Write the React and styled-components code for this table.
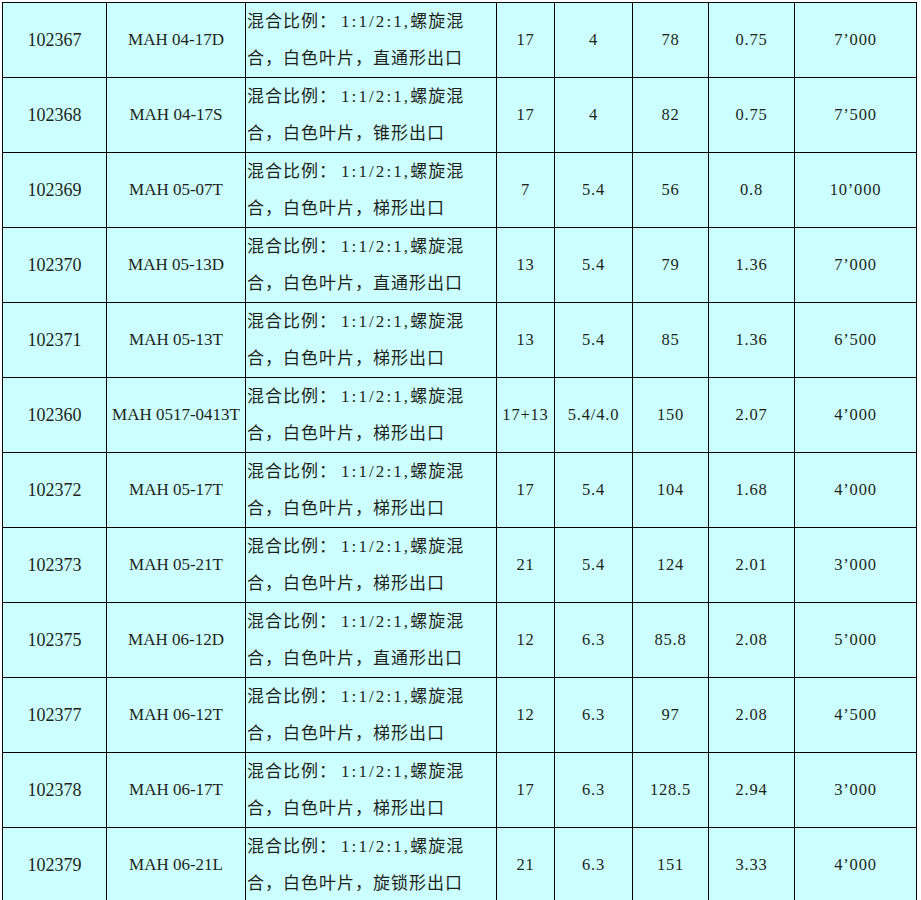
import styled, { createGlobalStyle } from "styled-components";

const GlobalStyle = createGlobalStyle`
  html, body {
    margin: 0;
    padding: 0;
    background: #ffffff;
  }
`;

const Page = styled.div`
  padding: 2px 0 0 2px;
`;

const Sheet = styled.div`
  display: grid;
  grid-template-columns: 103px 138px 250px 57px 77px 75px 85px 121px;
  grid-auto-rows: 74px;
  gap: 1px;
  width: max-content;
  background: #000;
  border: 1px solid #000;
  font-family: "Liberation Serif", "Noto Sans CJK SC", serif;
  color: #1f1f1a;
`;

const Row = styled.div`
  display: contents;
`;

const Cell = styled.div`
  background: #ccffff;
  display: flex;
  align-items: center;
  justify-content: center;
  white-space: nowrap;
  overflow: hidden;
  font-size: ${(p) => p.$size || 16}px;
  letter-spacing: ${(p) => p.$spacing || 0}px;
`;

const DescCell = styled(Cell)`
  flex-direction: column;
  align-items: flex-start;
  justify-content: center;
  padding-left: 1px;
  padding-bottom: 1px;
  font-size: 17px;
  letter-spacing: 1px;
`;

const DescLine = styled.span`
  display: block;
  line-height: 37px;
`;

const Ratio = styled.span`
  letter-spacing: 2.1px;
  margin-left: 4px;
`;

const rows = [
  ["102367", "MAH 04-17D", "直通形出口", "17", "4", "78", "0.75", "7’000"],
  ["102368", "MAH 04-17S", "锥形出口", "17", "4", "82", "0.75", "7’500"],
  ["102369", "MAH 05-07T", "梯形出口", "7", "5.4", "56", "0.8", "10’000"],
  ["102370", "MAH 05-13D", "直通形出口", "13", "5.4", "79", "1.36", "7’000"],
  ["102371", "MAH 05-13T", "梯形出口", "13", "5.4", "85", "1.36", "6’500"],
  ["102360", "MAH 0517-0413T", "梯形出口", "17+13", "5.4/4.0", "150", "2.07", "4’000"],
  ["102372", "MAH 05-17T", "梯形出口", "17", "5.4", "104", "1.68", "4’000"],
  ["102373", "MAH 05-21T", "梯形出口", "21", "5.4", "124", "2.01", "3’000"],
  ["102375", "MAH 06-12D", "直通形出口", "12", "6.3", "85.8", "2.08", "5’000"],
  ["102377", "MAH 06-12T", "梯形出口", "12", "6.3", "97", "2.08", "4’500"],
  ["102378", "MAH 06-17T", "梯形出口", "17", "6.3", "128.5", "2.94", "3’000"],
  ["102379", "MAH 06-21L", "旋锁形出口", "21", "6.3", "151", "3.33", "4’000"],
];

export default function App() {
  return (
    <>
      <GlobalStyle />
      <Page>
        <Sheet>
          {rows.map(([code, model, outlet, ...rest]) => (
            <Row key={code}>
              <Cell $size={18}>{code}</Cell>
              <Cell $size={17}>{model}</Cell>
              <DescCell>
                <DescLine>
                  混合比例：<Ratio>1:1/2:1,</Ratio>螺旋混
                </DescLine>
                <DescLine>合，白色叶片，{outlet}</DescLine>
              </DescCell>
              {rest.map((v, i) => (
                <Cell key={i} $size={16.5} $spacing={0.8}>
                  {v}
                </Cell>
              ))}
            </Row>
          ))}
        </Sheet>
      </Page>
    </>
  );
}
